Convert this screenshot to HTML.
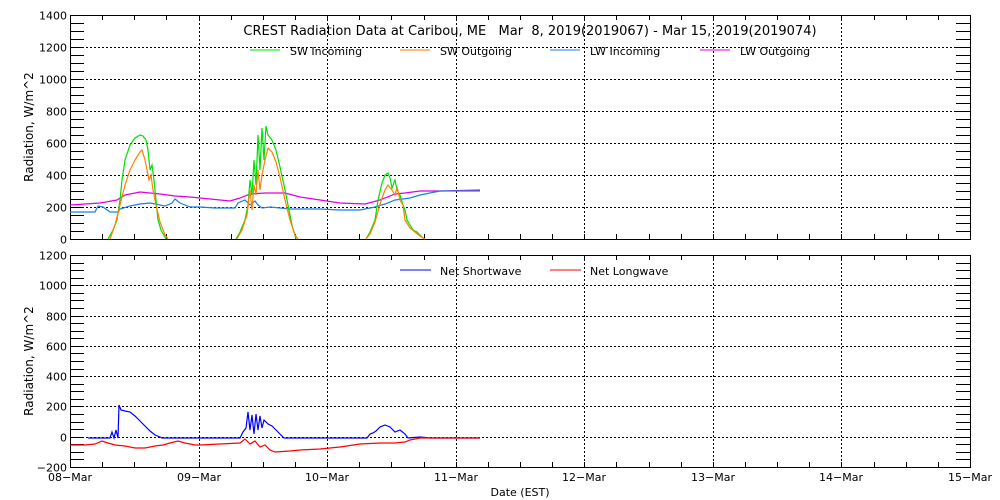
<!DOCTYPE html>
<html><head><meta charset="utf-8"><style>
html,body{margin:0;padding:0;background:#fff;}
svg{display:block;font-family:"DejaVu Sans","Liberation Sans",sans-serif;}
text{font-size:11px;fill:#000;}
</style></head><body>
<svg id="s" width="1000" height="500" xmlns="http://www.w3.org/2000/svg" shape-rendering="crispEdges">
<text x="530" y="35" text-anchor="middle" style="font-size:13px;white-space:pre" xml:space="preserve">CREST Radiation Data at Caribou, ME   Mar  8, 2019(2019067) - Mar 15, 2019(2019074)</text>
<line x1="250" y1="50" x2="280" y2="50" stroke="#00e000"/><text x="290" y="55">SW Incoming</text>
<line x1="400" y1="50" x2="430" y2="50" stroke="#ff7f00"/><text x="440" y="55">SW Outgoing</text>
<line x1="550" y1="50" x2="580" y2="50" stroke="#1e7fe0"/><text x="590" y="55">LW Incoming</text>
<line x1="700" y1="50" x2="730" y2="50" stroke="#e000e0"/><text x="740" y="55">LW Outgoing</text>
<line x1="400" y1="270" x2="431" y2="270" stroke="#0000ff"/><text x="440" y="275">Net Shortwave</text>
<line x1="550" y1="270" x2="581" y2="270" stroke="#ff0000"/><text x="590" y="275">Net Longwave</text>
<text x="520" y="496" text-anchor="middle">Date (EST)</text>
<text transform="translate(33,127) rotate(-90)" text-anchor="middle" style="font-size:12px">Radiation, W/m^2</text>
<text transform="translate(33,361) rotate(-90)" text-anchor="middle" style="font-size:12px">Radiation, W/m^2</text>
<g id="g"></g>
<g fill="none" shape-rendering="auto" stroke-width="1.2">
<polyline stroke="#e000e0" points="70,205 100,203 117,200 125,195 140,192 150,193 160,194 175,196 190,197 210,199 230,201 240,198 250,194 265,193 285,193 300,197 320,200 340,203 365,204 380,200 395,194 405,193 420,191 440,191 480,190"/>
<polyline stroke="#1e7fe0" points="70,212 95,212 98,206 103,207 110,212 118,212 120,209 130,206 140,204 150,203 165,206 172,203 175,199 180,203 185,205 190,207 200,207 215,208 235,208 238,203 245,200 250,205 255,201 258,205 262,208 270,207 290,209 320,209 340,210 360,210 375,207 385,204 395,200 410,198 420,195 440,191 460,191 480,191"/>
<polyline stroke="#00e000" points="108,239 113,230 117,220 120,200 122,180 125,160 130,145 135,138 140,135 143,136 146,140 148,150 150,170 152,165 154,180 156,200 158,220 161,230 166,239"/>
<polyline stroke="#00e000" points="236,239 240,232 245,220 248,205 250,180 252,195 254,160 256,185 258,135 260,170 262,128 264,160 266,126 268,135 272,140 276,150 280,167 284,185 288,205 292,225 296,239"/>
<polyline stroke="#00e000" points="366,239 370,232 375,220 378,200 382,183 385,175 388,173 390,178 392,188 395,180 397,190 400,195 403,205 405,210 407,220 410,225 413,230 417,232 420,235 424,239"/>
<polyline stroke="#ff7f00" points="110,239 115,225 120,205 125,185 130,170 135,160 140,152 142,150 145,160 147,170 149,180 151,175 153,190 156,205 160,222 165,235 168,239"/>
<polyline stroke="#ff7f00" points="237,239 242,230 247,215 250,190 252,210 254,185 256,195 258,170 260,190 262,175 265,160 268,148 272,152 276,162 280,177 285,200 290,220 295,235 298,239"/>
<polyline stroke="#ff7f00" points="366,239 370,234 375,222 380,204 385,190 388,185 392,190 395,195 397,187 400,200 403,205 405,220 410,228 415,232 420,236 425,239"/>
<polyline stroke="#0000ff" points="88,438 110,438 112,432 114,438 116,430 118,438 119,405 121,410 125,411 130,412 135,416 140,421 145,426 150,431 155,435 160,437 162,438 240,438 243,432 246,428 248,412 250,430 252,415 254,434 256,414 258,430 260,416 262,428 264,420 268,424 272,426 276,430 280,434 284,438 367,438 370,434 373,433 376,431 380,427 385,425 390,427 395,432 400,430 405,434 408,438 420,437 430,438 480,438"/>
<polyline stroke="#ff0000" points="70,445 85,445 95,444 102,441 108,443 115,445 125,446 135,448 145,448 155,446 163,445 170,443 178,441 185,443 195,445 200,445 220,444 240,443 245,439 250,444 255,441 260,447 265,445 270,450 275,452 290,451 300,450 320,449 340,447 360,444 380,443 395,443 405,442 410,440 420,438 440,438 480,438"/>
</g>
</svg>
<script>
var g=document.getElementById('g'),h='';
function L(a,b,c,d,dash){h+='<line x1="'+a+'" y1="'+b+'" x2="'+c+'" y2="'+d+'" stroke="#000"'+(dash?' stroke-dasharray="2,2"':'')+'/>';}
function T(x,y,s,anc){h+='<text x="'+x+'" y="'+y+'" text-anchor="'+anc+'">'+s+'</text>';}
var X0=70,X1=970,dw=900/7;
function panel(top,bot,vmin,vmax,minor){
 var sc=(bot-top)/(vmax-vmin);
 h+='<rect x="'+X0+'.5" y="'+top+'.5" width="'+(X1-X0)+'" height="'+(bot-top)+'" fill="none" stroke="#000"/>';
 for(var v=vmin;v<=vmax;v+=minor){var y=Math.round(bot-(v-vmin)*sc)+.5;L(X0,y,X0+14,y);L(X1-14,y,X1,y);}
 for(var v=vmin;v<=vmax;v+=200){var y=Math.round(bot-(v-vmin)*sc)+.5;if(v>vmin&&v<vmax)L(X0,y,X1,y,1);T(X0-3,y+4,String(v).replace('-','\u2212'),'end');}
 for(var i=0;i<=28;i++){var x=Math.round(X0+i*dw/4)+.5;L(x,top,x,top+5);L(x,bot-5,x,bot);if(i%4==0&&i>0&&i<28)L(x,top,x,bot,1);}
}
panel(15,239,0,1400,50);
panel(255,467,-200,1200,50);
var days=['08','09','10','11','12','13','14','15'];
for(var i=0;i<8;i++)T(Math.round(X0+i*dw),481,days[i]+'\u2212Mar','middle');
g.innerHTML=h;
</script>
</body></html>
